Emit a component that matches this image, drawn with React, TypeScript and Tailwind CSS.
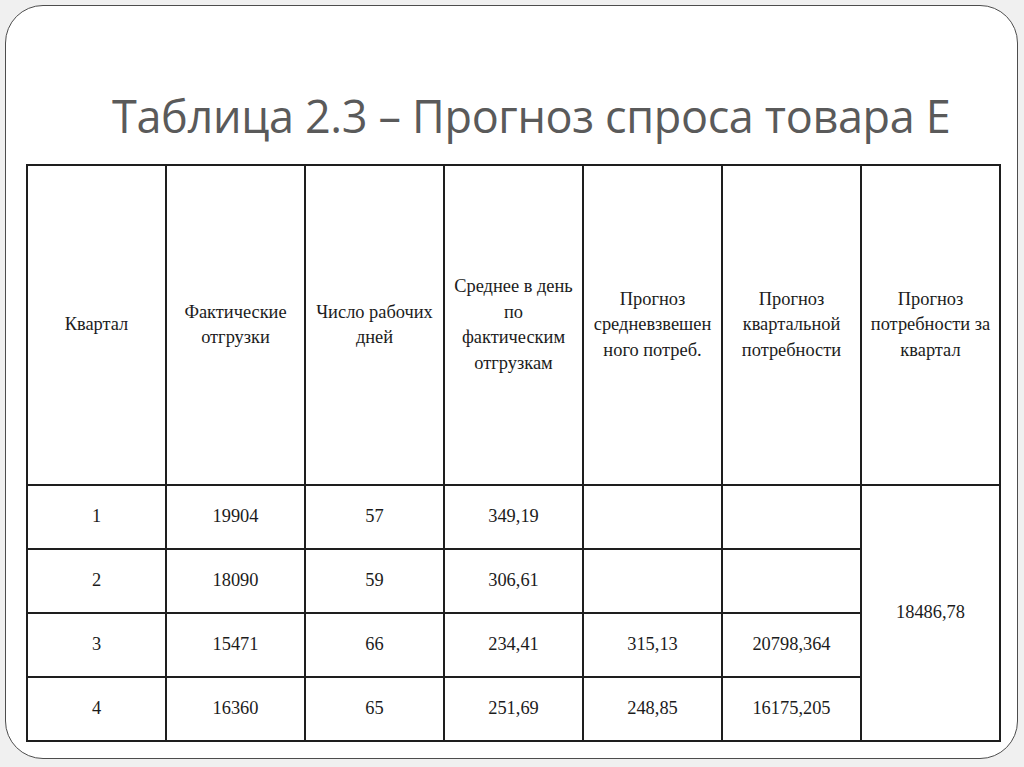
const header: string[][] = [
  ['Квартал'],
  ['Фактические', 'отгрузки'],
  ['Число рабочих', 'дней'],
  ['Среднее в день', 'по', 'фактическим', 'отгрузкам'],
  ['Прогноз', 'средневзвешен', 'ного потреб.'],
  ['Прогноз', 'квартальной', 'потребности'],
  ['Прогноз', 'потребности за', 'квартал'],
];

const rows = [
  ['1', '19904', '57', '349,19', '', ''],
  ['2', '18090', '59', '306,61', '', ''],
  ['3', '15471', '66', '234,41', '315,13', '20798,364'],
  ['4', '16360', '65', '251,69', '248,85', '16175,205'],
];

export default function App() {
  return (
    <div className="w-[1024px] h-[767px] bg-[#f0f0f0] p-[5px] pb-[8px]">
      <div className="h-full w-[1013px] bg-white border-[1.5px] border-[#4d4d4d] rounded-[38px] flex flex-col">
        <h1 className="h-[158px] pl-[106px] pt-[82px] text-[45px] leading-[56px] text-[#5a5a5a] font-['Open_Sans',sans-serif] tracking-[-0.35px] whitespace-nowrap">
          Таблица 2.3 – Прогноз спроса товара Е
        </h1>
        <div className="pl-[20px]">
          <table className="table-fixed border-collapse w-[972px] font-['Liberation_Serif',serif] text-[18.4px] leading-[25.5px] text-[#1c1c1c] text-center">
            <colgroup>
              {header.map((_, i) => (
                <col key={i} className="w-[139px]" />
              ))}
            </colgroup>
            <thead>
              <tr className="h-[320px]">
                {header.map((lines, i) => (
                  <th key={i} className="border-2 border-[#1e1e1e] font-normal align-middle whitespace-nowrap px-0">
                    {lines.map((l, j) => (
                      <div key={j}>{l}</div>
                    ))}
                  </th>
                ))}
              </tr>
            </thead>
            <tbody>
              {rows.map((r, i) => (
                <tr key={i} className="h-[64px]">
                  {r.map((c, j) => (
                    <td key={j} className="border-2 border-[#1e1e1e] align-middle">
                      {c}
                    </td>
                  ))}
                  {i === 0 && (
                    <td rowSpan={4} className="border-2 border-[#1e1e1e] align-middle">
                      18486,78
                    </td>
                  )}
                </tr>
              ))}
            </tbody>
          </table>
        </div>
      </div>
    </div>
  );
}
